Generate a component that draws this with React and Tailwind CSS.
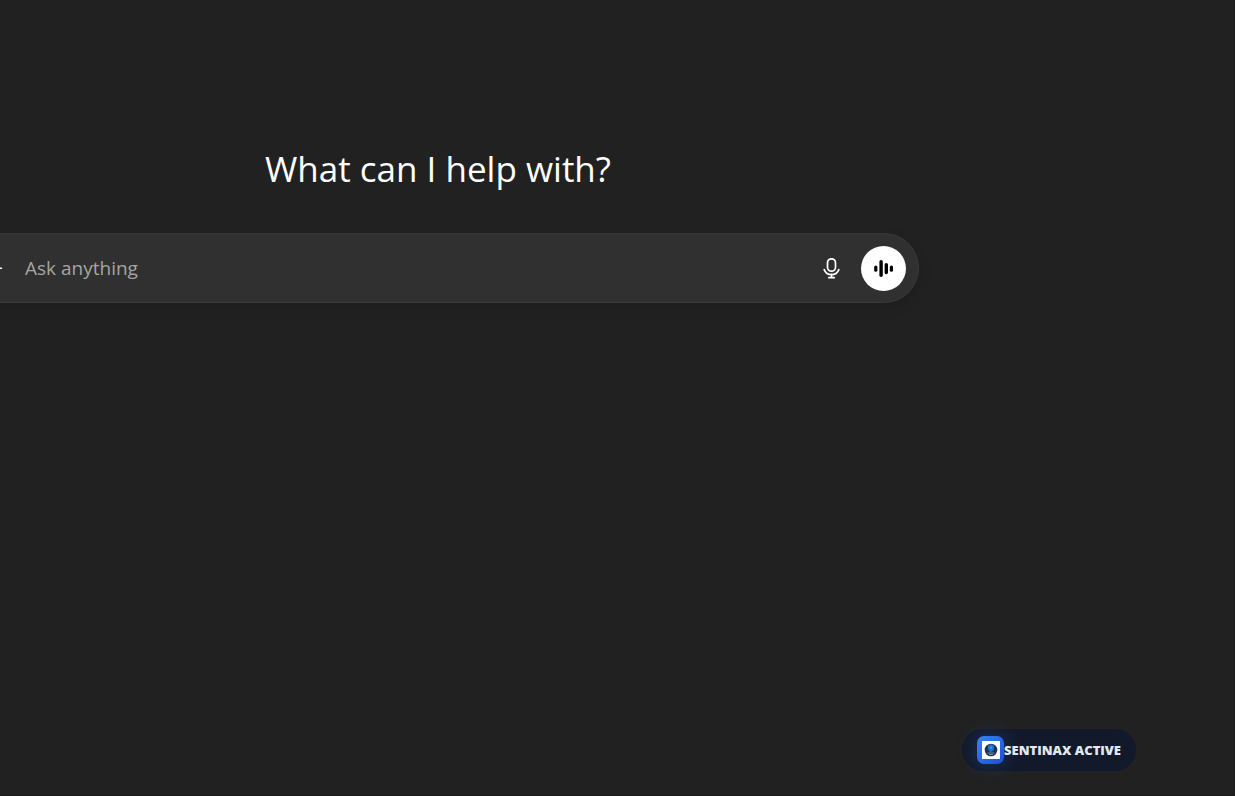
import { useState } from "react";

function PlusIcon() {
  return (
    <svg
      viewBox="0 0 20 20"
      className="h-6 w-6"
      fill="none"
      stroke="currentColor"
      strokeWidth="1.3"
      strokeLinecap="round">
      <path d="M10 2.5v15.4M2.3 10.2h15.6" />
    </svg>
  );
}

function MicIcon() {
  return (
    <svg
      viewBox="0 0 22 22"
      className="h-[22px] w-[22px]"
      fill="none"
      stroke="currentColor"
      strokeWidth="1.7"
      strokeLinecap="round">
      <rect x="7.5" y="1.8" width="8" height="12.4" rx="4" />
      <path d="M4.2 12.6a7.8 7.8 0 0 0 14.6 0" />
      <path d="M11.5 17.4v3.2M8.8 20.7h5.4" />
    </svg>
  );
}

function VoiceIcon() {
  return (
    <svg viewBox="0 0 22 22" className="h-[22px] w-[22px]" fill="currentColor">
      <rect x="1.2" y="8.4" width="3.2" height="6.4" rx="1.6" />
      <rect x="6.4" y="3" width="3.4" height="17" rx="1.7" />
      <rect x="11.6" y="6" width="3.4" height="11.2" rx="1.7" />
      <rect x="16.8" y="8.4" width="3.2" height="6.4" rx="1.6" />
    </svg>
  );
}

function ShieldLogo() {
  return (
    <svg viewBox="0 0 18 18" className="h-[18px] w-[18px]">
      <rect width="18" height="18" fill="#fff" />
      <circle cx="9" cy="9" r="6.3" fill="#1c3454" />
      <path d="M6 4.5 9 3.3l3 1.2v2.7c0 2-1.2 3.2-3 4-1.8-.8-3-2-3-4z" fill="#1f6fc4" />
      <circle cx="9" cy="6.6" r="1.2" fill="#3f9bea" />
      <path d="M5.6 12h6.8M7 13.5h4" stroke="#8b9bb0" strokeWidth=".8" />
    </svg>
  );
}

export default function App() {
  const [prompt, setPrompt] = useState("");

  return (
    <div className="flex min-h-screen flex-col overflow-hidden border-r border-b border-[#1b1a1b] bg-[#212121] font-['Open_Sans',sans-serif] text-white">
      <main className="flex-1 pt-[145px] pr-[358px]">
        <h1 className="text-center text-[35px] leading-[48px]">
          What can I help with?
        </h1>

        {/* the composer is wider than its column and runs off the left side */}
        <form
          onSubmit={(e) => e.preventDefault()}
          className="-mx-[43px] mt-10 flex h-[70px] items-center rounded-full border border-[#3a3a3a] bg-[#303030] px-3 shadow-[0_5px_14px_rgba(0,0,0,0.12)]">
          <button
            type="button"
            aria-label="Add files"
            className="flex h-11 w-11 items-center justify-center rounded-full">
            <PlusIcon />
          </button>
          <input
            type="text"
            aria-label="Ask anything"
            placeholder="Ask anything"
            value={prompt}
            onChange={(e) => setPrompt(e.target.value)}
            className="ml-[11px] min-w-0 flex-1 bg-transparent text-[19px] leading-7 outline-none placeholder:text-[#a5a5a5]"
          />
          <button
            type="button"
            aria-label="Dictate"
            className="flex h-11 w-11 items-center justify-center rounded-full">
            <MicIcon />
          </button>
          <button
            type="button"
            aria-label="Voice mode"
            className="ml-2 flex h-[45px] w-[45px] items-center justify-center rounded-full bg-white text-black">
            <VoiceIcon />
          </button>
        </form>
      </main>

      <div
        role="status"
        className="fixed right-[99px] bottom-[25px] flex h-[42px] items-center rounded-full bg-[#12192a] px-[15px]">
        <span className="flex h-7 w-[27px] items-center justify-center rounded-[7px] bg-linear-to-br from-[#3b82f6] to-[#1d4ed8] shadow-[0_0_20px_rgba(59,130,246,0.3)]">
          <ShieldLogo />
        </span>
        <span className="text-[13px] leading-5 font-extrabold text-[#e2e8f0]">
          SENTINAX ACTIVE
        </span>
      </div>
    </div>
  );
}
